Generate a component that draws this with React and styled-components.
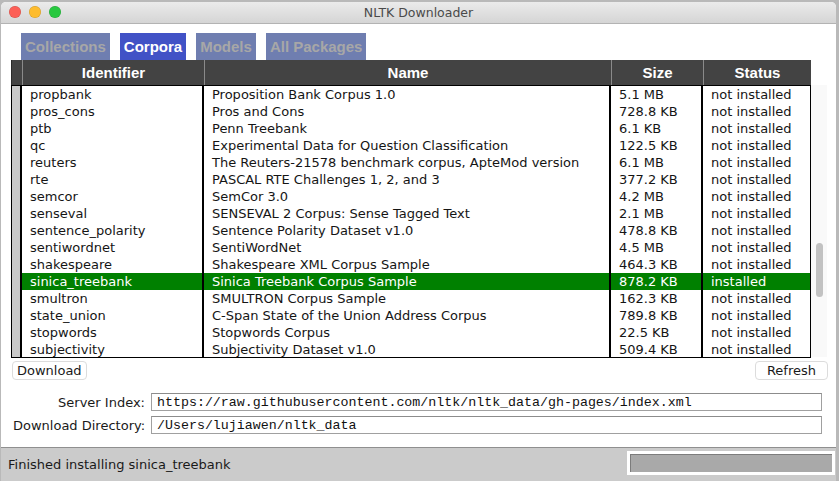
import React from "react";
import styled, { createGlobalStyle } from "styled-components";

const GlobalStyle = createGlobalStyle`
  html, body {
    margin: 0;
    padding: 0;
    background: #b9b9b9;
    overflow: hidden;
  }
  body {
    font-family: "DejaVu Sans", "Liberation Sans", Arial, sans-serif;
  }
`;

const Window = styled.div`
  display: flex;
  flex-direction: column;
  width: 835px;
  height: 479px;
  margin: 2px 0 0 1px;
  border-radius: 5px 5px 0 0;
  overflow: hidden;
  background: #fff;
`;

const TitleBar = styled.div`
  position: relative;
  display: flex;
  align-items: center;
  justify-content: center;
  height: 21px;
  flex: none;
  background: linear-gradient(#ebebeb, #d5d5d5);
  border-bottom: 1px solid #b3b3b3;
  font-family: "DejaVu Sans", sans-serif;
  font-size: 12.5px;
  color: #4a4a4a;
`;

const Lights = styled.div`
  position: absolute;
  left: 8px;
  top: 4px;
  display: flex;
  gap: 8px;
`;

const Light = styled.span`
  width: 12px;
  height: 12px;
  border-radius: 50%;
  background: ${(p) => p.$color};
  box-shadow: inset 0 0 0 0.5px rgba(0, 0, 0, 0.18);
`;

const Content = styled.div`
  flex: 1;
  display: flex;
  flex-direction: column;
  padding: 9px 8px 0 10px;
  background: #fff;
`;

const Tabs = styled.div`
  display: flex;
  gap: 10px;
  padding-left: 10px;
`;

const Tab = styled.div`
  height: 27px;
  padding: 0 4px;
  display: flex;
  align-items: center;
  font-family: "Liberation Sans", Arial, sans-serif;
  font-weight: bold;
  font-size: 15px;
  background: ${(p) => (p.$active ? "#4152c6" : "#6f7eb0")};
  color: ${(p) => (p.$active ? "#fff" : "#a7a7a7")};
`;

const TableArea = styled.div`
  display: flex;
`;

const Table = styled.div`
  width: 800px;
  display: flex;
  flex-direction: column;
`;

const HeadRow = styled.div`
  display: grid;
  grid-template-columns: 11px 182px 407px 92px 108px;
  height: 25px;
  background: #434343;
`;

const HeadCell = styled.div`
  display: flex;
  align-items: center;
  justify-content: center;
  border-left: 1px solid #8a8a8a;
  font-family: "Liberation Sans", Arial, sans-serif;
  font-weight: bold;
  font-size: 15px;
  color: #fff;
  &:first-child {
    border-left: 1px solid #2a2a2a;
  }
`;

const Body = styled.div`
  height: 271px;
  overflow: hidden;
  border: 1px solid #000;
`;

const Row = styled.div`
  display: grid;
  grid-template-columns: 10px 182px 407px 92px 107px;
  height: 17px;
`;

const Gutter = styled.div`
  background: #c9c9c9;
  border-right: 2px solid #000;
`;

const Cell = styled.div`
  display: flex;
  align-items: center;
  padding-left: 8px;
  font-size: 13px;
  white-space: nowrap;
  overflow: hidden;
  background: ${(p) => (p.$sel ? "#008000" : "#fff")};
  color: ${(p) => (p.$sel ? "#fff" : "#151515")};
  border-right: ${(p) => (p.$last ? "none" : "2px solid #000")};
`;

const Scroll = styled.div`
  width: 16px;
  margin-top: 25px;
  height: 272px;
  background: #f9f9f9;
  display: flex;
  justify-content: center;
  padding-top: 158px;
  box-sizing: border-box;
`;

const Thumb = styled.div`
  width: 7px;
  height: 54px;
  border-radius: 4px;
  background: #c2c2c2;
`;

const ButtonRow = styled.div`
  display: flex;
  justify-content: space-between;
  margin-top: 3px;
`;

const Button = styled.div`
  height: 17px;
  padding: ${(p) => (p.$right ? "0 11px" : "0 4px")};
  display: flex;
  align-items: center;
  border: 1px solid #dcdcdc;
  border-radius: 4px;
  font-size: 13px;
  color: #1a1a1a;
  background: #fff;
  margin-left: ${(p) => (p.$right ? "0" : "1px")};
`;

const Form = styled.div`
  display: flex;
  flex-direction: column;
  gap: 5px;
  margin-top: 13px;
`;

const Field = styled.div`
  display: flex;
  align-items: center;
  gap: 6px;
`;

const Label = styled.div`
  width: 132px;
  margin-left: 2px;
  text-align: right;
  font-size: 13px;
  color: #1a1a1a;
  white-space: nowrap;
`;

const Input = styled.div`
  width: 671px;
  height: 18px;
  display: flex;
  align-items: center;
  padding-left: 5px;
  box-sizing: border-box;
  border: 1px solid #a0a0a0;
  border-top-color: #8c8c8c;
  font-family: "Liberation Mono", "Courier New", monospace;
  font-size: 13.3px;
  color: #111;
  background: #fff;
`;

const StatusBar = styled.div`
  flex: none;
  height: 33px;
  display: flex;
  align-items: center;
  justify-content: space-between;
  background: #cbcbcb;
  border-top: 1px solid #8f8f8f;
  padding-left: 7px;
`;

const StatusText = styled.div`
  font-size: 13px;
  color: #1a1a1a;
`;

const Progress = styled.div`
  width: 202px;
  height: 18px;
  border: 3px solid #fff;
  margin-bottom: 4px;
  margin-right: 1px;
  background: #a9a9a9;
  box-shadow: inset 1px 1px 0 #7c7c7c;
`;

const rows = [
  ["propbank", "Proposition Bank Corpus 1.0", "5.1 MB"],
  ["pros_cons", "Pros and Cons", "728.8 KB"],
  ["ptb", "Penn Treebank", "6.1 KB"],
  ["qc", "Experimental Data for Question Classification", "122.5 KB"],
  ["reuters", "The Reuters-21578 benchmark corpus, ApteMod version", "6.1 MB"],
  ["rte", "PASCAL RTE Challenges 1, 2, and 3", "377.2 KB"],
  ["semcor", "SemCor 3.0", "4.2 MB"],
  ["senseval", "SENSEVAL 2 Corpus: Sense Tagged Text", "2.1 MB"],
  ["sentence_polarity", "Sentence Polarity Dataset v1.0", "478.8 KB"],
  ["sentiwordnet", "SentiWordNet", "4.5 MB"],
  ["shakespeare", "Shakespeare XML Corpus Sample", "464.3 KB"],
  ["sinica_treebank", "Sinica Treebank Corpus Sample", "878.2 KB", true],
  ["smultron", "SMULTRON Corpus Sample", "162.3 KB"],
  ["state_union", "C-Span State of the Union Address Corpus", "789.8 KB"],
  ["stopwords", "Stopwords Corpus", "22.5 KB"],
  ["subjectivity", "Subjectivity Dataset v1.0", "509.4 KB"],
];

const tabs = ["Collections", "Corpora", "Models", "All Packages"];

export default function App() {
  return (
    <>
      <GlobalStyle />
      <Window>
        <TitleBar>
          <Lights>
            <Light $color="#fc5f57" />
            <Light $color="#fdbc2e" />
            <Light $color="#28c840" />
          </Lights>
          NLTK Downloader
        </TitleBar>
        <Content>
          <Tabs>
            {tabs.map((t) => (
              <Tab key={t} $active={t === "Corpora"}>
                {t}
              </Tab>
            ))}
          </Tabs>
          <TableArea>
            <Table>
              <HeadRow>
                <HeadCell />
                <HeadCell>Identifier</HeadCell>
                <HeadCell>Name</HeadCell>
                <HeadCell>Size</HeadCell>
                <HeadCell>Status</HeadCell>
              </HeadRow>
              <Body>
                {rows.map(([id, name, size, installed]) => (
                  <Row key={id}>
                    <Gutter />
                    <Cell $sel={installed}>{id}</Cell>
                    <Cell $sel={installed}>{name}</Cell>
                    <Cell $sel={installed}>{size}</Cell>
                    <Cell $sel={installed} $last>
                      {installed ? "installed" : "not installed"}
                    </Cell>
                  </Row>
                ))}
              </Body>
            </Table>
            <Scroll>
              <Thumb />
            </Scroll>
          </TableArea>
          <ButtonRow>
            <Button>Download</Button>
            <Button $right>Refresh</Button>
          </ButtonRow>
          <Form>
            <Field>
              <Label>Server Index:</Label>
              <Input>https://raw.githubusercontent.com/nltk/nltk_data/gh-pages/index.xml</Input>
            </Field>
            <Field>
              <Label>Download Directory:</Label>
              <Input>/Users/lujiawen/nltk_data</Input>
            </Field>
          </Form>
        </Content>
        <StatusBar>
          <StatusText>Finished installing sinica_treebank</StatusText>
          <Progress />
        </StatusBar>
      </Window>
    </>
  );
}
